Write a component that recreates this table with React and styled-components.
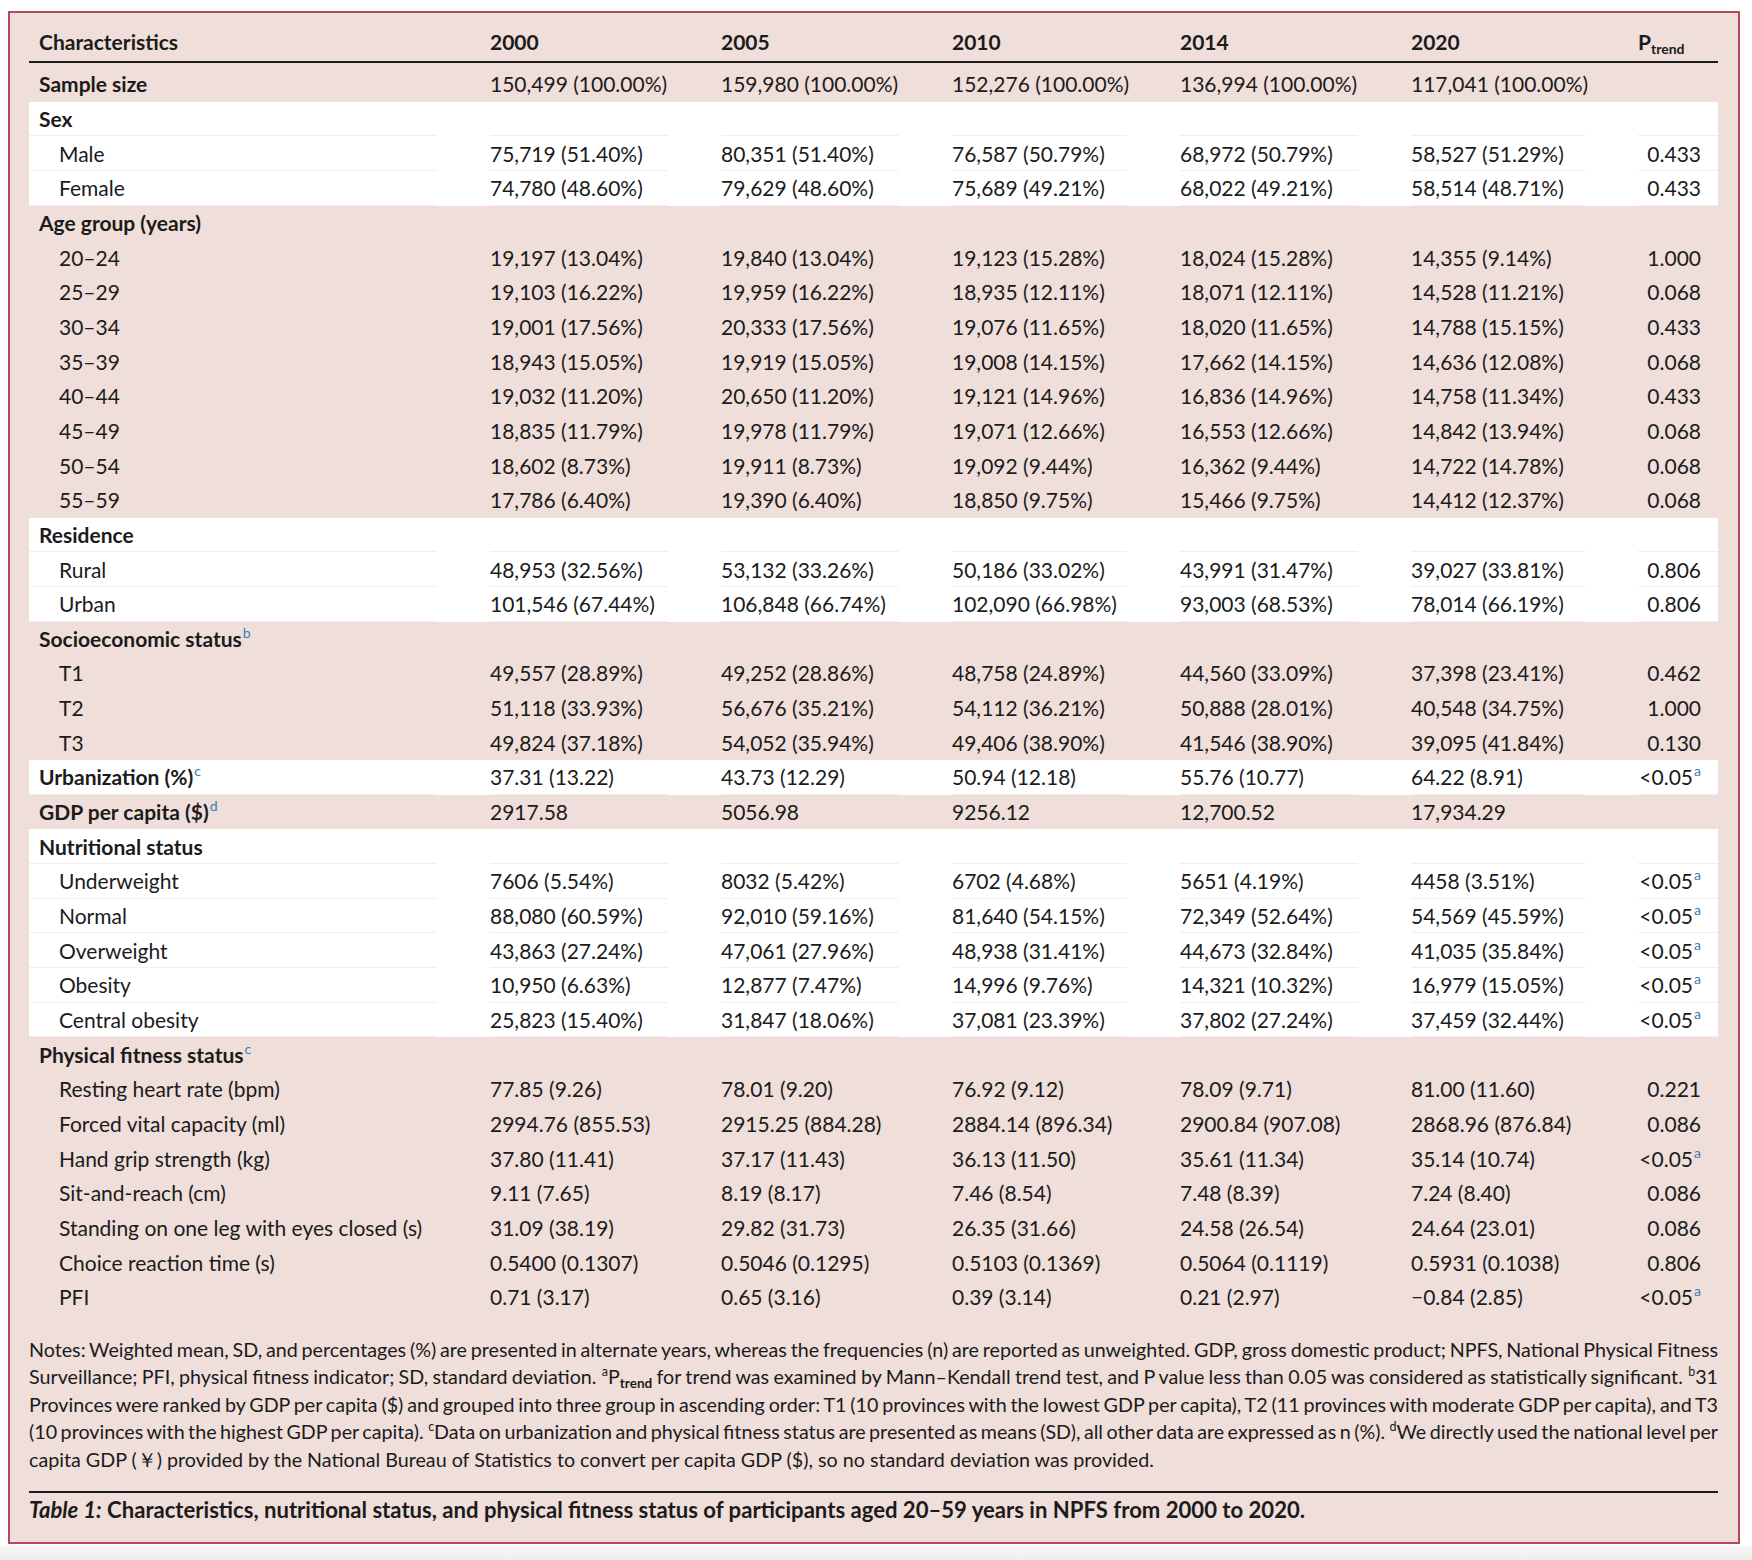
import React from "react";
import styled, { createGlobalStyle } from "styled-components";

const GlobalStyle = createGlobalStyle`
  html, body {
    margin: 0;
    padding: 0;
    background: #ffffff;
  }
  body {
    font-family: Lato, "Noto Sans", "Liberation Sans", sans-serif;
    color: #1b1b1b;
  }
`;

const COLS = "408px 178px 178px 175px 178px 174px 80px";

const Page = styled.div`
  width: 1752px;
  height: 1560px;
  display: flex;
  flex-direction: column;
`;

const Frame = styled.div`
  box-sizing: border-box;
  width: 1732px;
  height: 1533px;
  margin: 11px 0 0 8px;
  padding: 11px 20px 0 19px;
  border: 2px solid #b4485e;
  background: #efded9;
  display: flex;
  flex-direction: column;
`;

const BottomStrip = styled.div`
  flex: 1;
  margin-top: 2px;
  background: linear-gradient(#f7f7f7, #eeeeee);
`;

const HeadRow = styled.div`
  display: grid;
  grid-template-columns: ${COLS};
  column-gap: 53px;
  height: 39px;
  padding-bottom: 3px;
  box-sizing: border-box;
  align-items: center;
  border-bottom: 2px solid #1c1c1c;
  margin-bottom: 4px;
  font-size: 21px;
  font-weight: 700;
`;

const HeadCell = styled.div`
  padding-left: ${(p) => p.$indent || 0}px;
  white-space: nowrap;
`;

const Group = styled.div`
  background: ${(p) => (p.$white ? "#ffffff" : "transparent")};
`;

const Row = styled.div`
  display: grid;
  grid-template-columns: ${COLS};
  column-gap: 53px;
  height: 34.67px;
  font-size: 21px;
`;

const Cell = styled.div`
  display: flex;
  align-items: center;
  justify-content: ${(p) => (p.$right ? "flex-end" : "flex-start")};
  padding-left: ${(p) => p.$indent || 0}px;
  padding-right: ${(p) => (p.$right ? "17px" : "0")};
  font-weight: ${(p) => (p.$bold ? 700 : 400)};
  border-bottom: 1px solid ${(p) => (p.$lined ? "#f3eeed" : "transparent")};
  white-space: nowrap;
`;

const CellText = styled.span`
  line-height: 25px;
`;

const Sup = styled.sup`
  font-size: ${(p) => (p.$plain ? "12.5px" : "14px")};
  font-weight: 400;
  line-height: 0;
  vertical-align: ${(p) => (p.$plain ? "8px" : "9px")};
  color: ${(p) => (p.$plain ? "inherit" : "#3b7db2")};
  margin-left: 1px;
`;

const Sub = styled.sub`
  font-size: ${(p) => (p.$small ? "13.5px" : "14px")};
  line-height: 0;
  vertical-align: -4px;
  font-weight: 700;
`;

const Notes = styled.div`
  margin-top: 21px;
  font-size: 19.7px;
  line-height: 27.5px;
`;

const NoteLine = styled.div`
  text-align: justify;
  text-align-last: ${(p) => (p.$last ? "left" : "justify")};
  word-spacing: ${(p) => (p.$last ? "0" : "-2px")};
  white-space: nowrap;
`;

const CaptionRule = styled.div`
  margin-top: 18px;
  height: 2px;
  background: #1c1c1c;
`;

const Caption = styled.div`
  margin-top: 3px;
  font-size: 22.1px;
  line-height: 28px;
  font-weight: 700;

  em {
    font-style: italic;
  }
`;

const a = <Sup>a</Sup>;
const sig = <>&lt;0.05{a}</>;

const groups = [
  {
    white: false,
    rows: [
      {
        label: "Sample size",
        bold: true,
        values: ["150,499 (100.00%)", "159,980 (100.00%)", "152,276 (100.00%)", "136,994 (100.00%)", "117,041 (100.00%)", ""],
      },
    ],
  },
  {
    white: true,
    rows: [
      { label: "Sex", bold: true, values: [] },
      { label: "Male", values: ["75,719 (51.40%)", "80,351 (51.40%)", "76,587 (50.79%)", "68,972 (50.79%)", "58,527 (51.29%)", "0.433"] },
      { label: "Female", values: ["74,780 (48.60%)", "79,629 (48.60%)", "75,689 (49.21%)", "68,022 (49.21%)", "58,514 (48.71%)", "0.433"] },
    ],
  },
  {
    white: false,
    rows: [
      { label: "Age group (years)", bold: true, values: [] },
      { label: "20–24", values: ["19,197 (13.04%)", "19,840 (13.04%)", "19,123 (15.28%)", "18,024 (15.28%)", "14,355 (9.14%)", "1.000"] },
      { label: "25–29", values: ["19,103 (16.22%)", "19,959 (16.22%)", "18,935 (12.11%)", "18,071 (12.11%)", "14,528 (11.21%)", "0.068"] },
      { label: "30–34", values: ["19,001 (17.56%)", "20,333 (17.56%)", "19,076 (11.65%)", "18,020 (11.65%)", "14,788 (15.15%)", "0.433"] },
      { label: "35–39", values: ["18,943 (15.05%)", "19,919 (15.05%)", "19,008 (14.15%)", "17,662 (14.15%)", "14,636 (12.08%)", "0.068"] },
      { label: "40–44", values: ["19,032 (11.20%)", "20,650 (11.20%)", "19,121 (14.96%)", "16,836 (14.96%)", "14,758 (11.34%)", "0.433"] },
      { label: "45–49", values: ["18,835 (11.79%)", "19,978 (11.79%)", "19,071 (12.66%)", "16,553 (12.66%)", "14,842 (13.94%)", "0.068"] },
      { label: "50–54", values: ["18,602 (8.73%)", "19,911 (8.73%)", "19,092 (9.44%)", "16,362 (9.44%)", "14,722 (14.78%)", "0.068"] },
      { label: "55–59", values: ["17,786 (6.40%)", "19,390 (6.40%)", "18,850 (9.75%)", "15,466 (9.75%)", "14,412 (12.37%)", "0.068"] },
    ],
  },
  {
    white: true,
    rows: [
      { label: "Residence", bold: true, values: [] },
      { label: "Rural", values: ["48,953 (32.56%)", "53,132 (33.26%)", "50,186 (33.02%)", "43,991 (31.47%)", "39,027 (33.81%)", "0.806"] },
      { label: "Urban", values: ["101,546 (67.44%)", "106,848 (66.74%)", "102,090 (66.98%)", "93,003 (68.53%)", "78,014 (66.19%)", "0.806"] },
    ],
  },
  {
    white: false,
    rows: [
      { label: <>Socioeconomic status<Sup>b</Sup></>, bold: true, values: [] },
      { label: "T1", values: ["49,557 (28.89%)", "49,252 (28.86%)", "48,758 (24.89%)", "44,560 (33.09%)", "37,398 (23.41%)", "0.462"] },
      { label: "T2", values: ["51,118 (33.93%)", "56,676 (35.21%)", "54,112 (36.21%)", "50,888 (28.01%)", "40,548 (34.75%)", "1.000"] },
      { label: "T3", values: ["49,824 (37.18%)", "54,052 (35.94%)", "49,406 (38.90%)", "41,546 (38.90%)", "39,095 (41.84%)", "0.130"] },
    ],
  },
  {
    white: true,
    rows: [
      {
        label: <>Urbanization (%)<Sup>c</Sup></>,
        bold: true,
        values: ["37.31 (13.22)", "43.73 (12.29)", "50.94 (12.18)", "55.76 (10.77)", "64.22 (8.91)", sig],
      },
    ],
  },
  {
    white: false,
    rows: [
      {
        label: <>GDP per capita ($)<Sup>d</Sup></>,
        bold: true,
        values: ["2917.58", "5056.98", "9256.12", "12,700.52", "17,934.29", ""],
      },
    ],
  },
  {
    white: true,
    rows: [
      { label: "Nutritional status", bold: true, values: [] },
      { label: "Underweight", values: ["7606 (5.54%)", "8032 (5.42%)", "6702 (4.68%)", "5651 (4.19%)", "4458 (3.51%)", sig] },
      { label: "Normal", values: ["88,080 (60.59%)", "92,010 (59.16%)", "81,640 (54.15%)", "72,349 (52.64%)", "54,569 (45.59%)", sig] },
      { label: "Overweight", values: ["43,863 (27.24%)", "47,061 (27.96%)", "48,938 (31.41%)", "44,673 (32.84%)", "41,035 (35.84%)", sig] },
      { label: "Obesity", values: ["10,950 (6.63%)", "12,877 (7.47%)", "14,996 (9.76%)", "14,321 (10.32%)", "16,979 (15.05%)", sig] },
      { label: "Central obesity", values: ["25,823 (15.40%)", "31,847 (18.06%)", "37,081 (23.39%)", "37,802 (27.24%)", "37,459 (32.44%)", sig] },
    ],
  },
  {
    white: false,
    rows: [
      { label: <>Physical fitness status<Sup>c</Sup></>, bold: true, values: [] },
      { label: "Resting heart rate (bpm)", values: ["77.85 (9.26)", "78.01 (9.20)", "76.92 (9.12)", "78.09 (9.71)", "81.00 (11.60)", "0.221"] },
      { label: "Forced vital capacity (ml)", values: ["2994.76 (855.53)", "2915.25 (884.28)", "2884.14 (896.34)", "2900.84 (907.08)", "2868.96 (876.84)", "0.086"] },
      { label: "Hand grip strength (kg)", values: ["37.80 (11.41)", "37.17 (11.43)", "36.13 (11.50)", "35.61 (11.34)", "35.14 (10.74)", sig] },
      { label: "Sit-and-reach (cm)", values: ["9.11 (7.65)", "8.19 (8.17)", "7.46 (8.54)", "7.48 (8.39)", "7.24 (8.40)", "0.086"] },
      { label: "Standing on one leg with eyes closed (s)", values: ["31.09 (38.19)", "29.82 (31.73)", "26.35 (31.66)", "24.58 (26.54)", "24.64 (23.01)", "0.086"] },
      { label: "Choice reaction time (s)", values: ["0.5400 (0.1307)", "0.5046 (0.1295)", "0.5103 (0.1369)", "0.5064 (0.1119)", "0.5931 (0.1038)", "0.806"] },
      { label: "PFI", values: ["0.71 (3.17)", "0.65 (3.16)", "0.39 (3.14)", "0.21 (2.97)", "−0.84 (2.85)", sig] },
    ],
  },
];

const years = ["2000", "2005", "2010", "2014", "2020"];

const TableRow = ({ row, lined }) => {
  const cells = row.values.length ? row.values : ["", "", "", "", "", ""];
  return (
    <Row>
      <Cell $bold={row.bold} $indent={row.bold ? 10 : 30} $lined={lined}>
        <CellText>{row.label}</CellText>
      </Cell>
      {cells.map((v, i) => (
        <Cell key={i} $right={i === 5} $lined={lined}>
          <CellText>{v}</CellText>
        </Cell>
      ))}
    </Row>
  );
};

const App = () => {
  return (
    <>
      <GlobalStyle />
      <Page>
        <Frame>
          <HeadRow>
            <HeadCell $indent={10}>Characteristics</HeadCell>
            {years.map((y) => (
              <HeadCell key={y}>{y}</HeadCell>
            ))}
            <HeadCell>
              P<Sub>trend</Sub>
            </HeadCell>
          </HeadRow>

          {groups.map((g, gi) => (
            <Group key={gi} $white={g.white}>
              {g.rows.map((r, ri) => (
                <TableRow key={ri} row={r} lined={g.white} />
              ))}
            </Group>
          ))}

          <Notes>
            <NoteLine>
              Notes: Weighted mean, SD, and percentages (%) are presented in alternate years, whereas the frequencies (n) are reported as unweighted. GDP, gross domestic product; NPFS, National Physical Fitness
            </NoteLine>
            <NoteLine>
              Surveillance; PFI, physical fitness indicator; SD, standard deviation. <Sup $plain>a</Sup>P<Sub $small>trend</Sub> for trend was examined by Mann–Kendall trend test, and P value less than 0.05 was considered as statistically significant. <Sup $plain>b</Sup>31
            </NoteLine>
            <NoteLine>
              Provinces were ranked by GDP per capita ($) and grouped into three group in ascending order: T1 (10 provinces with the lowest GDP per capita), T2 (11 provinces with moderate GDP per capita), and T3
            </NoteLine>
            <NoteLine>
              (10 provinces with the highest GDP per capita). <Sup $plain>c</Sup>Data on urbanization and physical fitness status are presented as means (SD), all other data are expressed as n (%). <Sup $plain>d</Sup>We directly used the national level per
            </NoteLine>
            <NoteLine $last>
              capita GDP (￥) provided by the National Bureau of Statistics to convert per capita GDP ($), so no standard deviation was provided.
            </NoteLine>
          </Notes>

          <CaptionRule />
          <Caption>
            <em>Table 1:</em> Characteristics, nutritional status, and physical fitness status of participants aged 20–59 years in NPFS from 2000 to 2020.
          </Caption>
        </Frame>
        <BottomStrip />
      </Page>
    </>
  );
};

export default App;
